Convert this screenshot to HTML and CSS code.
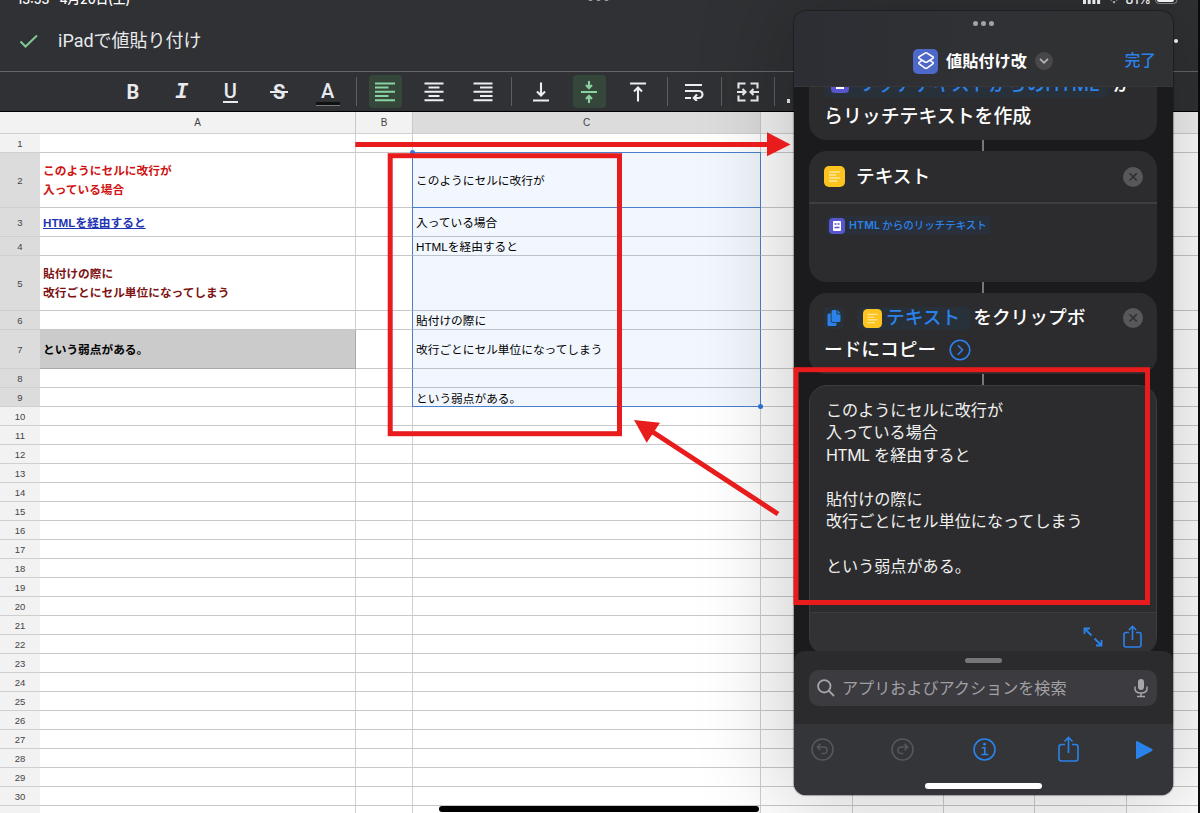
FILE: index.html
```html
<!DOCTYPE html>
<html lang="ja">
<head>
    <meta charset="UTF-8">
    <meta name="viewport" content="width=device-width, initial-scale=1.0">
    <title>iPadで値貼り付け</title>
    <link rel="stylesheet" href="styles.css">
</head>
<body>
    <div class="screen">
        <div class="status-bar">
            <span>13:53</span>
            <span class="date">4月20日(土)</span>
            <span class="dots"><i></i><i></i><i></i></span>
            <span class="status-right">
                <svg width="18" height="12" viewBox="0 0 18 12" fill="#fff"><path d="M0 7h3v5H0zM4.7 5h3v7h-3zM9.4 2h3v10h-3zM14.1 0h3v12h-3z"/></svg>
                <svg class="wifi" width="12" height="10" viewBox="0 0 12 10" fill="none" stroke="#fff" stroke-width="1.8"><path d="M.5 3.500q5.500-5 11 0M2.500 6q3.500-3 7 0"/><path d="M4.500 7.500h3L6 9.500z" fill="#fff" stroke="none"/></svg>
                <span>81%</span>
                <svg width="25" height="12" viewBox="0 0 25 12"><rect x=".5" y=".5" width="21.500" height="11" rx="3.500" fill="none" stroke="#8a8a8d"/><rect x="2" y="2" width="17" height="8" rx="2" fill="#fff"/><path d="M23 4v4q1.500-.5 1.500-2T23 4z" fill="#8a8a8d"/></svg>
            </span>
        </div>

        <header class="doc-header">
            <svg width="20" height="15" viewBox="0 0 20 15" fill="none" stroke="#81c995" stroke-width="2"><path d="M1.500 7.500l5 5L18 1.500"/></svg>
            <h1>iPadで値貼り付け</h1>
            <span class="more"></span>
        </header>

        <div class="toolbar">
            <div class="group">
                <button class="letter bold">B</button>
                <button class="letter italic"><span>I</span></button>
                <button class="letter underline"><span>U</span></button>
                <button class="letter strike"><span>S</span></button>
                <button class="letter color"><span>A</span></button>
            </div>
            <div class="group">
                <button class="active"><svg width="20" height="20" viewBox="0 0 20 20"><path d="M0 1.500h20M0 5.500h13.500M0 9.700h20M0 14h13.500M0 18.200h20"/></svg></button>
                <button><svg width="20" height="20" viewBox="0 0 20 20"><path d="M.5 1.500h19M4.500 5.500h11M.5 9.700h19M4.500 14h11M.5 18.200h19"/></svg></button>
                <button><svg width="20" height="20" viewBox="0 0 20 20"><path d="M.5 1.500h19M7 5.500h12.500M.5 9.700h19M7 14h12.500M.5 18.200h19"/></svg></button>
            </div>
            <div class="group">
                <button><svg width="18" height="20" viewBox="0 0 18 20"><path d="M1 18.500h16M9 .5v12M5 9.500l4 4 4-4"/></svg></button>
                <button class="active"><svg width="18" height="24" viewBox="0 0 18 24"><path d="M1 12h16M9 1v6M9 23v-6M6 5l3 3.200L12 5M6 19l3-3.200 3 3.200"/></svg></button>
                <button><svg width="18" height="20" viewBox="0 0 18 20"><path d="M1 1.500h16M9 19.500v-13M5 9.500l4-4 4 4"/></svg></button>
            </div>
            <div class="group narrow wrap">
                <button><svg width="20" height="18" viewBox="0 0 20 18"><path d="M1 2h17M1 8h14a3.300 3.300 0 0 1 0 7h-4M1 15h6M13 11.500L9.800 15l3.200 3"/></svg></button>
            </div>
            <div class="group narrow">
                <button><svg width="22" height="20" viewBox="0 0 22 20"><path d="M8.500 1.500H1.500v5M13.500 1.500h7v5M8.500 18.500H1.500v-5M13.500 18.500h7v-5M0 10h8M22 10h-8M5.500 7l3 3-3 3M16.500 7l-3 3 3 3"/></svg></button>
            </div>
            <div class="group overflow"><span></span></div>
        </div>

        <main class="sheet" id="sheet">
            <div class="row head"><span></span><span>A</span><span>B</span><span class="selected">C</span><span></span><span></span><span></span><span></span><span></span></div>
            <div class="row"><b>1</b><p></p><p></p><p></p><p></p><p></p><p></p><p></p><p></p></div>
            <div class="row tall picked"><b>2</b><p class="red">このようにセルに改行が<br>入っている場合</p><p></p><p class="fill first">このようにセルに改行が</p><p></p><p></p><p></p><p></p><p></p></div>
            <div class="row link-row picked"><b>3</b><p class="link">HTMLを経由すると</p><p></p><p class="fill">入っている場合</p><p></p><p></p><p></p><p></p><p></p></div>
            <div class="row picked"><b>4</b><p></p><p></p><p class="fill">HTMLを経由すると</p><p></p><p></p><p></p><p></p><p></p></div>
            <div class="row tall picked"><b>5</b><p class="maroon">貼付けの際に<br>改行ごとにセル単位になってしまう</p><p></p><p class="fill"></p><p></p><p></p><p></p><p></p><p></p></div>
            <div class="row picked"><b>6</b><p></p><p></p><p class="fill">貼付けの際に</p><p></p><p></p><p></p><p></p><p></p></div>
            <div class="row mid picked"><b>7</b><p class="gray">という弱点がある。</p><p></p><p class="fill">改行ごとにセル単位になってしまう</p><p></p><p></p><p></p><p></p><p></p></div>
            <div class="row picked"><b>8</b><p></p><p></p><p class="fill"></p><p></p><p></p><p></p><p></p><p></p></div>
            <div class="row picked"><b>9</b><p></p><p></p><p class="fill last">という弱点がある。</p><p></p><p></p><p></p><p></p><p></p></div>
        </main>
        <div class="home-indicator"></div>

        <section class="panel">
            <div class="panel-header">
                <div class="grabber"><i></i><i></i><i></i></div>
                <div class="panel-title">
                    <span class="app-icon"><svg width="18" height="20" viewBox="0 0 18 20" fill="none" stroke="#fff" stroke-width="1.600" stroke-linejoin="round"><path d="M8 2.100q1-.6 2 0l5.800 3.600q1 .8 0 1.600L10 11q-1 .6-2 0L2.200 7.300q-1-.8 0-1.600z"/><path d="M5 9.300l-2.800 2q-1 .8 0 1.600L8 17.100q1 .6 2 0l5.800-4.200q1-.8 0-1.600L13 9.300"/></svg></span>
                    <h2>値貼付け改</h2>
                    <span class="chevron"><svg width="10" height="6" viewBox="0 0 10 6" fill="none" stroke="#b5b5b8" stroke-width="1.700"><path d="M1 .8l4 4 4-4"/></svg></span>
                    <a class="done">完了</a>
                </div>
            </div>

            <div class="panel-body">
                <div class="card make-rich">
                    <p><span class="token"><svg class="html-icon" width="18" height="18" viewBox="0 0 18 18"><rect width="18" height="18" rx="4" fill="#5756ce"/><rect x="5" y="3.500" width="8" height="10.500" fill="#fff"/></svg>リッチテキストからのHTML</span> か</p>
                    <p>らリッチテキストを作成</p>
                </div>
                <div class="connector"></div>
                <div class="card text-card">
                    <div class="card-title">
                        <svg width="21" height="21" viewBox="0 0 21 21"><rect width="21" height="21" rx="5" fill="#fdc41f"/><path d="M5 6h11M5 9h7M5 12h11M5 15h8" stroke="#ffe69a" stroke-width="1.500"/></svg>
                        <h3>テキスト</h3>
                        <span class="close">✕</span>
                    </div>
                    <div class="card-content">
                        <span class="chip"><svg width="16" height="16" viewBox="0 0 16 16"><rect width="16" height="16" rx="4" fill="#5756ce"/><rect x="4" y="3" width="8" height="10" rx="1" fill="#fff"/><path d="M5.500 6h2M8.500 6h2M5.500 9.500h5" stroke="#5756ce" stroke-width="1.500"/></svg>HTML<span>からのリッチテキスト</span></span>
                    </div>
                </div>
                <div class="connector"></div>
                <div class="card copy-card">
                    <div class="copy-line">
                        <span class="copy-icon"><svg width="14" height="16" viewBox="0 0 14 16" fill="#2b82ea"><path d="M4.500 1.500q0-1.500 1.500-1.500h3.500v3q0 1.500 1.500 1.500h2.500v6q0 1.500-1.500 1.500H6q-1.500 0-1.500-1.500z"/><path d="M10.500 0v2.500q0 1 1 1h2zM3.700 3.500H2Q.5 3.500.5 5v9.500Q.5 16 2 16h6q1.500 0 1.500-1.500v-1.700H5.500q-1.800 0-1.800-1.800z"/></svg></span>
                        <span class="token"><svg width="19" height="19" viewBox="0 0 21 21"><rect width="21" height="21" rx="5" fill="#fdc41f"/><path d="M5 6h11M5 9h7M5 12h11M5 15h8" stroke="#ffe69a" stroke-width="1.500"/></svg>テキスト</span>
                        <span>をクリップボ</span>
                        <span class="close">✕</span>
                    </div>
                    <div class="copy-line second">
                        <span>ードにコピー</span>
                        <svg width="22" height="22" viewBox="0 0 22 22" fill="none" stroke="#2b82ea" stroke-width="1.600"><circle cx="11" cy="11" r="9.800"/><path d="M8.800 6.300l4.700 4.700-4.700 4.700"/></svg>
                    </div>
                </div>
                <div class="connector"></div>
                <div class="card result">
                    <p>このようにセルに改行が<br>入っている場合<br><span class="latin">HTML</span> を経由すると<br><br>貼付けの際に<br>改行ごとにセル単位になってしまう<br><br>という弱点がある。</p>
                    <div class="result-actions">
                        <svg width="20" height="20" viewBox="0 0 20 20" fill="none" stroke="#2b82ea" stroke-width="1.800"><path d="M1.500 7V1.500H7M1.500 1.500l7 7M18.500 13v5.500H13M18.500 18.500l-7-7"/></svg>
                        <svg width="19" height="23" viewBox="0 0 19 23" fill="none" stroke="#2b82ea" stroke-width="1.600"><path d="M6 7.500H3Q1 7.500 1 9.500V20q0 2 2 2h13q2 0 2-2V9.500q0-2-2-2h-3M9.500 15V1.500M5.800 5l3.700-3.700L13.200 5"/></svg>
                    </div>
                </div>
            </div>

            <div class="search-sheet">
                <div class="handle"></div>
                <div class="search">
                    <svg width="18" height="18" viewBox="0 0 18 18" fill="none" stroke="#a5a5aa" stroke-width="1.800"><circle cx="7.300" cy="7.300" r="6.200"/><path d="M11.700 11.700L17 17"/></svg>
                    <span>アプリおよびアクションを検索</span>
                    <svg width="14" height="20" viewBox="0 0 14 20" fill="none" stroke="#a5a5aa" stroke-width="1.500"><rect x="4" y="1" width="6" height="11" rx="3" fill="#a5a5aa" stroke="none"/><path d="M1 8.500v2q0 4.500 6 4.500t6-4.500v-2M7 15v3.500M3 18.500h8"/></svg>
                </div>
            </div>
            <div class="bottom-bar">
                <svg width="23" height="23" viewBox="0 0 23 23" fill="none" stroke="#58585b" stroke-width="1.500"><circle cx="11.500" cy="11.500" r="10.500"/><path d="M9.500 5.800L6.300 9l3.200 3.200M6.500 9h6.200q3.300 0 3.300 3.200 0 3.300-3.300 3.300h-2"/></svg>
                <svg width="23" height="23" viewBox="0 0 23 23" fill="none" stroke="#58585b" stroke-width="1.500"><circle cx="11.500" cy="11.500" r="10.500"/><path d="M13.500 5.800L16.700 9l-3.200 3.200M16.500 9h-6.200Q7 9 7 12.200q0 3.300 3.300 3.300h2"/></svg>
                <svg width="23" height="23" viewBox="0 0 23 23" fill="none" stroke="#2b82ea" stroke-width="1.600"><circle cx="11.500" cy="11.500" r="10.500"/><path d="M8.800 9.700h3v6.800M8.300 16.500h7"/><circle cx="11.500" cy="6.200" r="1.400" fill="#2b82ea" stroke="none"/></svg>
                <svg class="share" width="21" height="26" viewBox="0 0 21 26" fill="none" stroke="#2b82ea" stroke-width="1.600"><path d="M7 8.500H3.500q-2.500 0-2.500 2.500v11.500Q1 25 3.500 25h14q2.500 0 2.500-2.500V11q0-2.500-2.500-2.500H14M10.500 17V1.500M6.500 5.500l4-4 4 4"/></svg>
                <svg width="18" height="20" viewBox="0 0 18 20" fill="#2b82ea"><path d="M1 2q0-1.500 1.400-.8L17 9q1.200 1 0 2L2.400 18.800Q1 19.500 1 18z"/></svg>
            </div>
            <div class="panel-indicator"></div>
        </section>

        <!-- red callouts -->
        <svg class="callouts" width="1200" height="813" viewBox="0 0 1200 813">
            <g fill="none" stroke="#e81c1c" stroke-width="5">
                <rect x="390.200" y="155.700" width="229.300" height="278"/>
                <rect x="796" y="369.700" width="351.500" height="232.800"/>
                <path d="M355.300 144.500H768M778 514L652 431.500"/>
            </g>
            <g fill="#e81c1c">
                <path d="M767 132.300v24L790.500 144.500z"/>
                <path d="M634 420l26 2.800-13.300 20z"/>
            </g>
        </svg>
        <div class="edge"></div>
    </div>

    <script>
        // remaining empty rows
        const sheet = document.getElementById("sheet");
        for (let n = 10; n <= 31; n++) {
            const row = document.createElement("div");
            row.className = "row";
            row.innerHTML = `<b>${n}</b>` + "<p></p>".repeat(8);
            sheet.appendChild(row);
        }
    </script>
</body>
</html>
```
FILE: styles.css
```css
* {
    box-sizing: border-box;
}

body {
    margin: 0;
    font-family: Inter, 'Noto Sans CJK JP', sans-serif;
    color: white;
    background-color: #303134;
}

h1, h2, h3, p {
    margin: 0;
    font-weight: 400;
}

svg {
    display: block;
    flex-shrink: 0;
}

.screen {
    position: relative;
    width: 1200px;
    height: 813px;
    overflow: hidden;
    display: flex;
    flex-direction: column;
}

/* Status bar */
.status-bar {
    height: 12px;
    flex-shrink: 0;
    display: flex;
    align-items: flex-end;
    padding: 0 20px 4px 17px;
    font-size: 12.500px;
    font-weight: 500;
    line-height: 17px;
    position: relative;
}

.date {
    margin-left: 10px;
}

.dots {
    position: absolute;
    left: 588px;
    top: -4px;
    display: flex;
    gap: 3px;
}

.dots i {
    width: 5px;
    height: 5px;
    border-radius: 50%;
    background-color: #a9a9ac;
}

.status-right {
    margin-left: auto;
    display: flex;
    align-items: flex-end;
    gap: 4px;
    line-height: 17px;
}

.status-right .wifi {
    margin: 0 2px 4px 3px;
}

.status-right svg {
    margin-bottom: 4px;
}

/* Document header */
.doc-header {
    height: 60px;
    flex-shrink: 0;
    display: flex;
    align-items: center;
    padding: 0 22px 1px 19px;
    border-bottom: 1px solid #65676b;
}

.doc-header h1 {
    margin-left: 19px;
    font-family: Roboto, 'Noto Sans CJK JP', sans-serif;
    font-size: 18px;
    color: #e8eaed;
    line-height: 26px;
}

.doc-header .more {
    margin-left: auto;
    width: 4px;
    height: 4px;
    border-radius: 50%;
    background-color: white;
}

.toolbar {
    height: 40px;
    flex-shrink: 0;
    display: flex;
    align-items: center;
    padding-left: 116.500px;
    border-bottom: 1px solid black;
}

.group {
    display: flex;
    gap: 15.700px;
    align-items: center;
}

.group + .group::before {
    content: "";
    width: 1px;
    height: 29px;
    background-color: #5c5e62;
    margin: 0 -4px 0 12px;
}

.group.narrow::before {
    margin: 0 -6px 0 10px;
}

.group.narrow.wrap::before {
    margin-left: 12.500px;
}

.group.overflow::before {
    margin-left: 10px;
}

.overflow span {
    width: 3px;
    height: 4px;
    margin-top: 18px;
    background-color: #e8eaed;
}

button {
    width: 33px;
    height: 33px;
    padding: 0;
    border: none;
    border-radius: 4px;
    background: none;
    color: #e8eaed;
    display: flex;
    align-items: center;
    justify-content: center;
}

button svg {
    fill: none;
    stroke: #eceef0;
    stroke-width: 2.100;
}

button.active {
    background-color: #35473b;
}

.active svg {
    stroke: #8ad29f;
}

.letter {
    font: 700 20px/20px Roboto, sans-serif;
}

.letter.italic {
    font: italic 700 22px/20px 'Liberation Mono', monospace;
}

.italic span {
    padding-top: 3px;
}

.letter.underline span {
    font-weight: 500;
    font-size: 20px;
    height: 20px;
    margin-top: 3px;
    line-height: 17px;
    padding: 0 1px;
    border-bottom: 2px solid #e8eaed;
}

.letter.strike span {
    position: relative;
}

.strike span::after {
    content: "";
    position: absolute;
    left: -3px;
    right: -3px;
    top: 9px;
    height: 2px;
    background-color: #e8eaed;
}

.letter.color span {
    width: 24px;
    font-weight: 500;
    height: 23px;
    margin-top: 3px;
    line-height: 18px;
    border-bottom: 3px solid #111;
    box-shadow: 0 1px 0 #77797c;
}

/* Spreadsheet */
.sheet {
    flex-shrink: 0;
    background-color: white;
    color: black;
    font-family: 'Liberation Sans', 'Noto Sans CJK JP', sans-serif;
}

.row {
    display: grid;
    grid-template-columns: 40px 316px 57px 348px 92px 91px 91px 92px 73px;
    grid-template-rows: 100%;
    height: 19px;
}

.row.head {
    height: 22px;
    background-color: #f2f2f2;
    font-size: 10px;
    color: #444;
}

.head span {
    display: flex;
    align-items: center;
    justify-content: center;
    border-right: 1px solid #c8c8c8;
    border-bottom: 1px solid #d0d0d0;
}

.head span:first-child {
    border-right: none;
}

.head .selected {
    background-color: #dcdcdc;
}

.row.tall {
    height: 55px;
}

.row.link-row {
    height: 29px;
}

.row.mid {
    height: 39px;
}

.row b {
    display: flex;
    align-items: center;
    justify-content: center;
    background-color: #f2f2f2;
    border-bottom: 1px solid #cfcfcf;
    font-size: 9.500px;
    font-weight: 400;
    color: #444;
}

.row.picked b {
    background-color: #dcdcdc;
}

.row p {
    display: flex;
    align-items: center;
    padding: 0 3px;
    border-right: 1px solid #cfcfcf;
    border-bottom: 1px solid #c8c8c8;
    font-size: 11.700px;
    line-height: 19px;
    white-space: nowrap;
}

.row .red,
.row .maroon,
.row .link,
.row .gray {
    font-weight: 700;
}

.row .red {
    color: #d01414;
}

.row .link {
    color: #1f35b4;
    text-decoration: underline;
}

.row .maroon {
    color: #7d1414;
}

.row .gray {
    background-color: #cbcbcb;
    border-color: #a9a9a9;
}

.row .fill {
    background-color: #f2f7fe;
    border-color: #bcc2cb;
    border-right-color: #4a7fd0;
    border-left: 1px solid #4a7fd0;
    margin-left: -1px;
    padding-left: 3px;
    position: relative;
}

.row .fill.first {
    border-bottom-color: #4a7fd0;
    box-shadow: 0 -1px 0 #4a7fd0;
}

.row .fill.last {
    border-bottom-color: #4a7fd0;
    padding-top: 2px;
}

.fill.first::before,
.fill.last::after {
    content: "";
    position: absolute;
    width: 5px;
    height: 5px;
    border-radius: 50%;
    background-color: #2d76dc;
}

.fill.first::before {
    left: -3px;
    top: -3px;
}

.fill.last::after {
    right: -3px;
    bottom: -3px;
}

.home-indicator {
    position: absolute;
    left: 439px;
    top: 806px;
    width: 320px;
    height: 6px;
    border-radius: 3px;
    background-color: black;
}

/* Shortcuts window */
.panel {
    position: absolute;
    left: 794px;
    top: 11px;
    width: 379px;
    height: 784px;
    border-radius: 12px;
    overflow: hidden;
    display: flex;
    flex-direction: column;
    background-color: #1b1b1d;
    box-shadow: 0 0 1px 1px rgba(0, 0, 0, 0.3), 0 0 90px 10px rgba(0, 0, 0, 0.2);
}

.panel-header {
    height: 76px;
    flex-shrink: 0;
    background: linear-gradient(90deg, #2c2e34, #303134 50%, #303133);
    border-bottom: 1px solid #38383b;
}

.grabber {
    display: flex;
    justify-content: center;
    gap: 3px;
    padding-top: 10px;
}

.grabber i {
    width: 5px;
    height: 5px;
    border-radius: 50%;
    background-color: #a3a3a6;
}

.panel-title {
    display: flex;
    align-items: center;
    height: 26px;
    margin-top: 22px;
    padding: 0 17px 0 119px;
}

.app-icon {
    width: 25px;
    height: 25px;
    border-radius: 5px;
    background-color: #4d68c8;
    display: flex;
    align-items: center;
    justify-content: center;
}

.panel-title h2 {
    margin-left: 8px;
    font-size: 16.200px;
    font-weight: 700;
    line-height: 24px;
}

.chevron {
    width: 18px;
    height: 18px;
    margin-left: 8px;
    border-radius: 50%;
    background-color: #48484b;
    display: flex;
    align-items: center;
    justify-content: center;
}

.done {
    margin-left: auto;
    font-size: 15.700px;
    font-weight: 500;
    line-height: 24px;
    color: #2b82ea;
}

.panel-body {
    height: 564px;
    flex-shrink: 0;
    padding: 0 16px 0 15px;
    overflow: hidden;
}

.card {
    border-radius: 18px;
    background-color: #2c2c2e;
    font-size: 18.700px;
    font-weight: 500;
    line-height: 32px;
}

.connector {
    width: 2px;
    height: 11px;
    margin: 0 auto;
    background-color: #77777a;
}

.make-rich {
    height: 53px;
    border-radius: 0 0 18px 18px;
    display: flex;
    flex-direction: column;
    justify-content: flex-end;
    padding: 0 15px 7px;
    font-size: 18.900px;
    white-space: nowrap;
}

.make-rich p {
    font-weight: 500;
}

.make-rich .token {
    padding: 2px 8px 2px 7px;
}

.make-rich .html-icon {
    display: inline-block;
    vertical-align: -2px;
    margin-right: 8px;
}

.token {
    border-radius: 5px;
    background-color: #28303a;
    color: #2b82ea;
}

.text-card {
    height: 131px;
}

.card-title {
    display: flex;
    align-items: center;
    height: 53px;
    padding: 0 14px 0 15px;
    border-bottom: 2px solid #3e3e41;
}

.card-title h3 {
    margin-left: 11px;
    font-size: 18.700px;
    font-weight: 500;
}

.close {
    width: 20px;
    height: 20px;
    margin-left: auto;
    border-radius: 50%;
    background-color: #58585b;
    color: #2c2c2e;
    font: 14px/20px 'DejaVu Sans', sans-serif;
    text-align: center;
}

.card-content {
    padding: 12px 17px;
    display: flex;
}

.chip {
    display: flex;
    align-items: center;
    height: 19px;
    padding: 0 4px 0 3px;
    border-radius: 4px;
    background-color: #293039;
    color: #2b82ea;
    font-size: 10.500px;
    font-weight: 600;
    letter-spacing: 0.2px;
}

.chip svg {
    margin-right: 4px;
}

.chip span {
    margin-left: 2px;
    font-weight: 500;
    letter-spacing: 0;
}

.copy-card {
    height: 81px;
    padding: 9px 14px 0 15px;
}

.copy-line {
    display: flex;
    align-items: center;
    height: 32px;
}

.copy-icon {
    width: 20px;
    height: 22px;
    border-radius: 4px;
    background-color: #28303a;
    display: flex;
    align-items: center;
    justify-content: center;
    margin-right: 13px;
}

.copy-line .token {
    display: flex;
    align-items: center;
    gap: 4px;
    height: 23px;
    padding: 0 10px 0 6px;
    margin-right: 3px;
}

.copy-line.second svg {
    margin-left: 13px;
}

.result {
    height: 270px;
    border: 1px solid #3c3c3f;
    overflow: hidden;
    display: flex;
    flex-direction: column;
}

.result p {
    flex: 1;
    padding: 13px 15px 13px 16px;
    font-size: 16.100px;
    font-weight: 400;
    line-height: 22.300px;
    color: #f0f0f0;
}

.result .latin {
    letter-spacing: -0.6px;
}

.result-actions {
    height: 42px;
    display: flex;
    align-items: center;
    justify-content: flex-end;
    gap: 20px;
    padding: 6px 14px 0 0;
    border-top: 1px solid #3c3c3f;
    background-color: #323234;
}

/* Search and bottom bar */
.search-sheet {
    height: 73px;
    flex-shrink: 0;
    padding: 7px 16px 0 15px;
    border-radius: 10px 10px 0 0;
    background-color: #2b2b2d;
}

.handle {
    width: 37px;
    height: 5px;
    margin: 0 auto;
    border-radius: 3px;
    background-color: #77777a;
}

.search {
    display: flex;
    align-items: center;
    height: 36px;
    margin-top: 7px;
    padding: 0 9px 0 8px;
    border-radius: 10px;
    background-color: #3c3b40;
    color: #a0a0a5;
    font-size: 16.100px;
    line-height: 24px;
}

.search span {
    margin: 0 auto 0 7px;
}

.bottom-bar {
    flex: 1;
    display: flex;
    align-items: flex-start;
    gap: 56.500px;
    padding: 14px 20px 0 17px;
    background-color: #343538;
}

.bottom-bar .share {
    margin-top: -2px;
}

.bottom-bar svg:nth-child(2) {
    margin-right: 3px;
}

.bottom-bar svg:nth-child(3) {
    margin-right: 5px;
}

.bottom-bar svg:last-child {
    margin-top: 2px;
}

.panel-indicator {
    position: absolute;
    left: 131px;
    bottom: 6px;
    width: 117px;
    height: 6px;
    border-radius: 3px;
    background-color: white;
}

.callouts {
    position: absolute;
    left: 0;
    top: 0;
}

.edge {
    position: absolute;
    right: 0;
    top: 0;
    width: 2px;
    height: 813px;
    background-color: #0b0b0c;
}
```
